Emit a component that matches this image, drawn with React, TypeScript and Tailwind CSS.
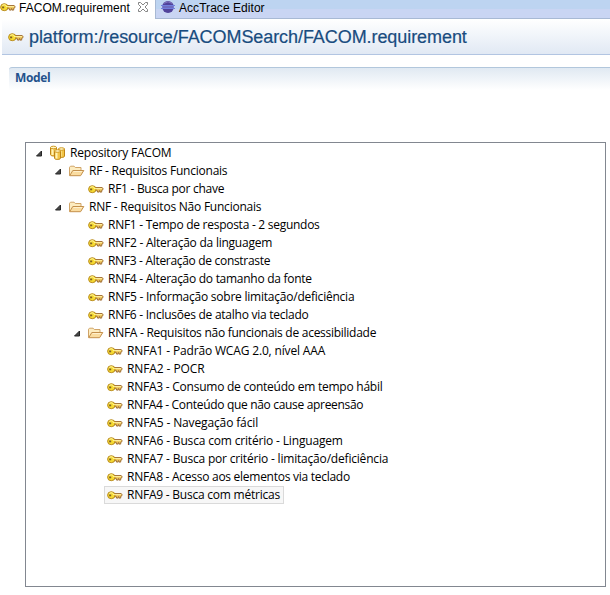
import React from "react";

type Kind = "repo" | "folder" | "key";
type Node = { depth: number; kind: Kind; label: string; tracking: string; selected?: boolean };

const nodes: Node[] = [
  { depth: 0, kind: "repo", tracking: "tracking-[-0.19px]", label: "Repository FACOM" },
  { depth: 1, kind: "folder", tracking: "tracking-[-0.23px]", label: "RF - Requisitos Funcionais" },
  { depth: 2, kind: "key", tracking: "tracking-[-0.28px]", label: "RF1 - Busca por chave" },
  { depth: 1, kind: "folder", tracking: "tracking-[-0.23px]", label: "RNF - Requisitos Não Funcionais" },
  { depth: 2, kind: "key", tracking: "tracking-[-0.27px]", label: "RNF1 - Tempo de resposta - 2 segundos" },
  { depth: 2, kind: "key", tracking: "tracking-[-0.24px]", label: "RNF2 - Alteração da linguagem" },
  { depth: 2, kind: "key", tracking: "tracking-[-0.31px]", label: "RNF3 - Alteração de constraste" },
  { depth: 2, kind: "key", tracking: "tracking-[-0.28px]", label: "RNF4 - Alteração do tamanho da fonte" },
  { depth: 2, kind: "key", tracking: "tracking-[-0.23px]", label: "RNF5 - Informação sobre limitação/deficiência" },
  { depth: 2, kind: "key", tracking: "tracking-[-0.26px]", label: "RNF6 - Inclusões de atalho via teclado" },
  { depth: 2, kind: "folder", tracking: "tracking-[-0.27px]", label: "RNFA - Requisitos não funcionais de acessibilidade" },
  { depth: 3, kind: "key", tracking: "tracking-[-0.16px]", label: "RNFA1 - Padrão WCAG 2.0, nível AAA" },
  { depth: 3, kind: "key", tracking: "tracking-[-0.1px]", label: "RNFA2 - POCR" },
  { depth: 3, kind: "key", tracking: "tracking-[-0.24px]", label: "RNFA3 - Consumo de conteúdo em tempo hábil" },
  { depth: 3, kind: "key", tracking: "tracking-[-0.32px]", label: "RNFA4 - Conteúdo que não cause apreensão" },
  { depth: 3, kind: "key", tracking: "tracking-[-0.13px]", label: "RNFA5 - Navegação fácil" },
  { depth: 3, kind: "key", tracking: "tracking-[-0.17px]", label: "RNFA6 - Busca com critério - Linguagem" },
  { depth: 3, kind: "key", tracking: "tracking-[-0.19px]", label: "RNFA7 - Busca por critério - limitação/deficiência" },
  { depth: 3, kind: "key", tracking: "tracking-[-0.27px]", label: "RNFA8 - Acesso aos elementos via teclado" },
  { depth: 3, kind: "key", tracking: "tracking-[-0.23px]", label: "RNFA9 - Busca com métricas", selected: true },
];

const indents = ["pl-[8px]", "pl-[27px]", "pl-[46px]", "pl-[65px]"];

function KeyIcon() {
  return (
    <svg width="16" height="16" viewBox="0 0 16 16" className="shrink-0">
      <path d="M6.500 6.500h7.700l1 1.400-1 1.500h-.5v1.700h-1.700V9.700h-.8v1.400H9.500V9.700H6.500z" fill="#f0c860" stroke="#9c6a30" strokeWidth=".9" />
      <ellipse cx="4.300" cy="8.200" rx="3.700" ry="3.500" fill="#f7dc32" stroke="#b88a20" strokeWidth="1" />
      <path d="M2.300 6.400q1.900-1.400 3.900 0" fill="none" stroke="#fff6a0" strokeWidth="1" />
      <rect x="2.100" y="7.500" width="2.100" height="1.800" fill="#806026" />
      <path d="M6 7.500h8" stroke="#fff0a0" strokeWidth=".9" />
    </svg>
  );
}

function FolderIcon() {
  return (
    <svg width="16" height="16" viewBox="0 0 16 16" className="shrink-0">
      <path d="M.5 12.500V4.200l1-1h3.600l1.200 1.300h5.700v3" fill="#fdecc0" stroke="#d0a468" />
      <path d="M.7 12.700 3.800 7.500h11L11.600 12.700z" fill="#fadca0" stroke="#c4904c" />
      <path d="M4.500 8.500h8.600" stroke="#fff0cc" />
    </svg>
  );
}

function Cylinder({ x, y }: { x: number; y: number }) {
  return (
    <g transform={`translate(${x} ${y})`}>
      <path d="M.5 2v7c0 2 6 2 6 0V2z" fill="#f2c447" stroke="#bf8516" />
      <path d="M2.500 3.500v6" stroke="#fff3b8" strokeWidth="2" />
      <ellipse cx="3.500" cy="2" rx="3" ry="1.300" fill="#fff5c4" stroke="#d09a24" />
    </g>
  );
}

function RepoIcon() {
  return (
    <svg width="16" height="16" viewBox="0 0 16 16" className="shrink-0">
      <Cylinder x={0} y={0.5} />
      <Cylinder x={8} y={2} />
      <Cylinder x={4} y={4} />
    </svg>
  );
}

function EclipseIcon() {
  return (
    <svg width="16" height="16" viewBox="0 0 16 16" className="shrink-0">
      <circle cx="8" cy="8" r="5.900" fill="#51439b" />
      <path d="M4 4.300q4-3 8 0" fill="none" stroke="#8478c0" />
      <path d="M1 6.500h14M1 9.500h14" stroke="#707fdd" />
      <path d="M2 8h12" stroke="#8c98e8" />
    </svg>
  );
}

function TreeRow({ node }: { node: Node }) {
  return (
    <div className={`flex h-[18px] items-center ${indents[node.depth]}`}>
      <svg width="10" height="10" viewBox="0 0 10 10" className="shrink-0">
        {node.kind !== "key" && <path d="M7.500 3v5h-5z" fill="#484848" stroke="#262626" strokeWidth="1" />}
      </svg>
      <div className={`ml-[3px] flex h-[18px] items-center border pl-[2px] ${node.selected ? "w-[180px] border-[#dadada] bg-[#f7f7f7]" : "border-transparent"}`}>
        {node.kind === "key" ? <KeyIcon /> : node.kind === "folder" ? <FolderIcon /> : <RepoIcon />}
        <span className={`ml-[4px] whitespace-nowrap text-[12px] leading-4 ${node.tracking}`}>{node.label}</span>
      </div>
    </div>
  );
}

export default function App() {
  return (
    <div className="flex h-[595px] w-[610px] flex-col overflow-hidden bg-white font-['Open_Sans','Noto_Sans',sans-serif] text-black">
      <div className="flex h-[19px] shrink-0 font-['Liberation_Sans',Arial,sans-serif] text-[12px] leading-4">
        <div className="flex w-[155px] shrink-0 items-start bg-white">
          <div className="-mt-px"><KeyIcon /></div>
          <span className="ml-[3px] w-[111px] whitespace-nowrap tracking-[0.05px]">FACOM.requirement</span>
          <svg width="12" height="12" viewBox="0 0 12 12" className="ml-[7px] mt-px">
            <path d="M1.500 1.500h2L6 4l2.500-2.500h2v2L8 6l2.500 2.500v2h-2L6 8l-2.500 2.500h-2v-2L4 6 1.500 3.500z" fill="white" stroke="#777" strokeWidth=".9" />
          </svg>
        </div>
        <div className="flex flex-1 items-start border-b border-l border-[#a8b9d4] bg-gradient-to-b from-[#bdd4f1] from-50% to-[#c9d5f3] to-50% pl-[4px]">
          <div className="-mt-px"><EclipseIcon /></div>
          <span className="ml-[3px] whitespace-nowrap tracking-[0.05px]">AccTrace Editor</span>
        </div>
      </div>
      <header className="ml-[2px] flex h-[36px] shrink-0 items-center border-b border-[#b2c5e2] bg-gradient-to-b from-white to-[#e1e9f4] pl-[6px]">
        <KeyIcon />
        <h1 className="ml-[5px] mt-px whitespace-nowrap font-['Liberation_Sans',Arial,sans-serif] text-[18px] leading-5 tracking-[-0.07px] text-[#194c7f] [-webkit-text-stroke:0.2px_#194c7f]">platform:/resource/FACOMSearch/FACOM.requirement</h1>
      </header>
      <section className="ml-[9px] mt-[12px] flex flex-1 flex-col">
        <div className="h-[23px] shrink-0 rounded-tl-[3px] border-t border-[#b2c7dc] bg-gradient-to-b from-[#e0e9f2] to-white pl-[6px] pt-[2px]">
          <h2 className="text-[12px] font-bold leading-4 tracking-[-0.35px] text-[#24528c]">Model</h2>
        </div>
        <div className="ml-[16px] mt-[52px] h-[445px] w-[581px] shrink-0 border border-[#828790] pt-px">
          {nodes.map((node) => <TreeRow key={node.label} node={node} />)}
        </div>
      </section>
    </div>
  );
}
